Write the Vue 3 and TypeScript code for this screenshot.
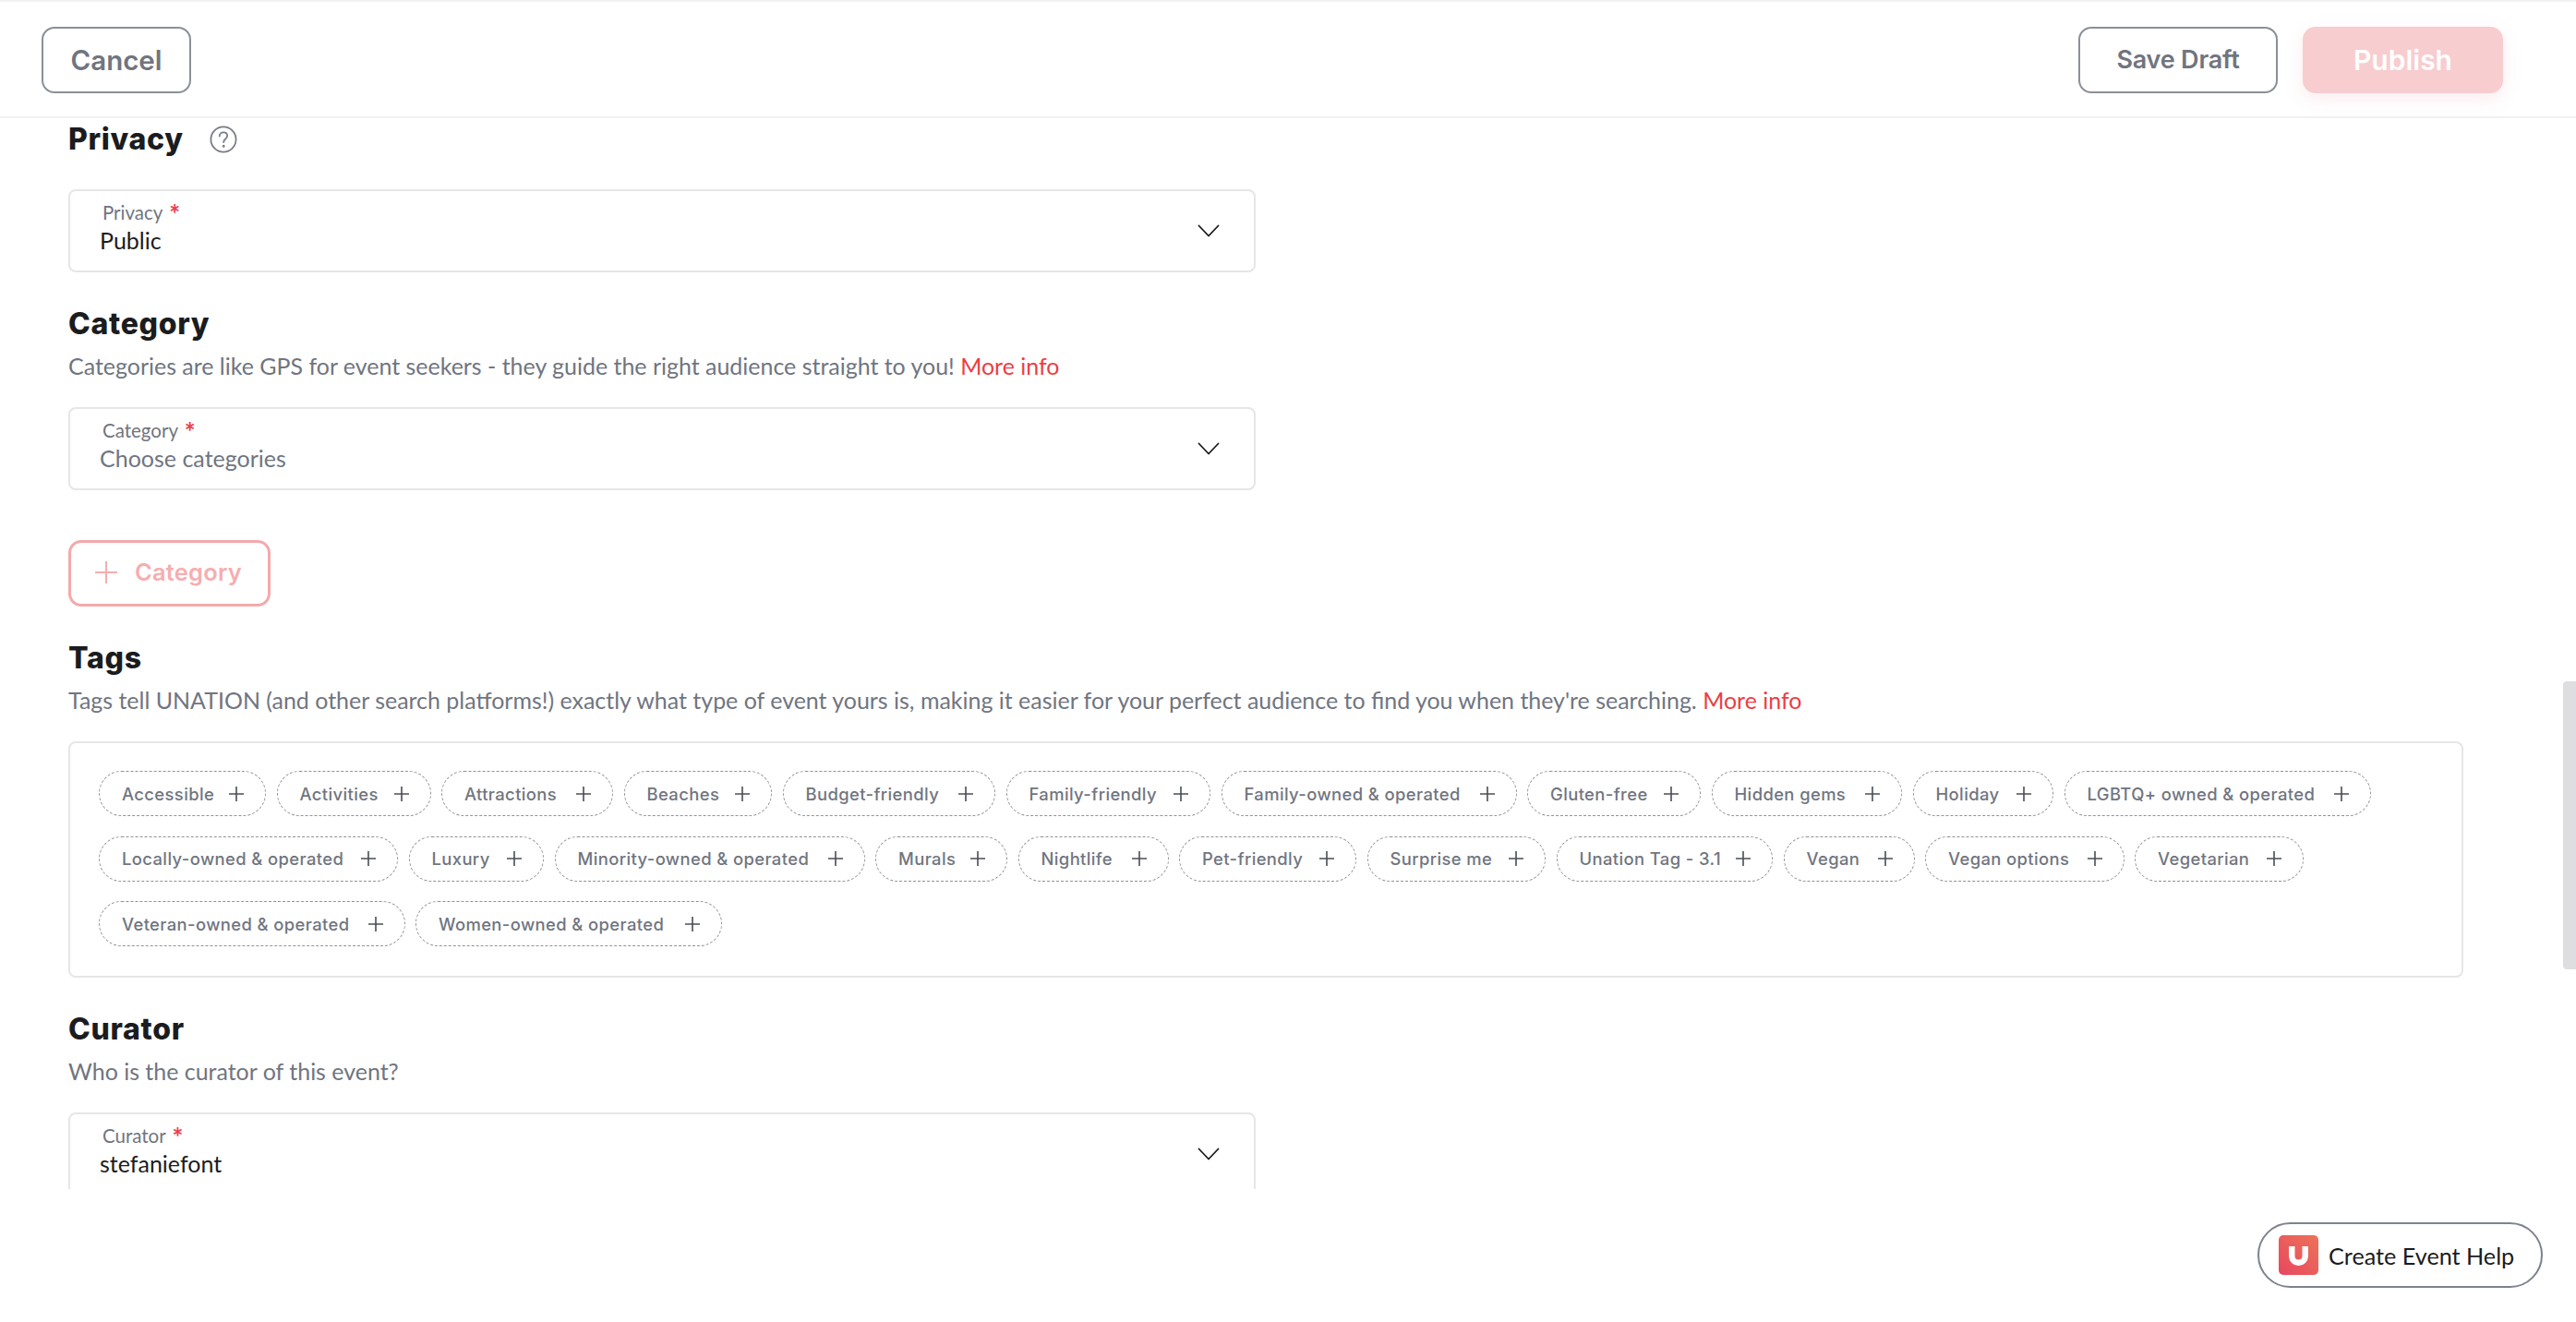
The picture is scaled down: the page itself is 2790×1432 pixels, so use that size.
<template>
  <div class="page">
    <header class="topbar">
      <button class="btn btn-outline cancel">Cancel</button>
      <div class="topbar-right">
        <button class="btn btn-outline draft">Save Draft</button>
        <button class="btn publish">Publish</button>
      </div>
    </header>

    <main class="scroller">
      <section class="privacy">
        <h2 class="heading">
          Privacy
          <svg class="help" viewBox="0 0 30 30" fill="none" stroke="#787c86" stroke-width="1.8">
            <circle cx="15" cy="15" r="13.6" />
            <path d="M10.800 11.500c0-2.500 1.900-4.200 4.300-4.200s4.100 1.600 4.100 3.800c0 3.300-4 3.500-4 6.900" stroke-linecap="round" />
            <circle cx="15.200" cy="22.200" r="0.600" fill="#787c86" />
          </svg>
        </h2>
        <div class="select">
          <div class="select-text">
            <span class="select-label">Privacy <i>*</i></span>
            <span class="select-value">Public</span>
          </div>
          <svg class="chevron" viewBox="0 0 24 14" fill="none" stroke="#1b1c20" stroke-width="1.800">
            <path d="M1.500 1.500 12 12.500 22.500 1.500" stroke-linecap="round" stroke-linejoin="round" />
          </svg>
        </div>
      </section>

      <section class="category">
        <h2 class="heading">Category</h2>
        <p class="desc">
          Categories are like GPS for event seekers - they guide the right audience straight to you!
          <a class="more">More info</a>
        </p>
        <div class="select">
          <div class="select-text">
            <span class="select-label">Category <i>*</i></span>
            <span class="select-value placeholder">Choose categories</span>
          </div>
          <svg class="chevron" viewBox="0 0 24 14" fill="none" stroke="#1b1c20" stroke-width="1.800">
            <path d="M1.500 1.500 12 12.500 22.500 1.500" stroke-linecap="round" stroke-linejoin="round" />
          </svg>
        </div>
        <button class="add-category">
          <svg viewBox="0 0 24 24" fill="none" stroke="#f5aeb0" stroke-width="2">
            <path d="M12 0v24M0 12h24" />
          </svg>
          Category
        </button>
      </section>

      <section class="tags">
        <h2 class="heading">Tags</h2>
        <p class="desc">
          Tags tell UNATION (and other search platforms!) exactly what type of event yours is, making it easier for your perfect audience to find you when they're searching.
          <a class="more">More info</a>
        </p>
        <div class="tag-box">
          <span v-for="tag in tags" :key="tag.name" class="chip" :style="{ width: tag.width + 'px' }">
            {{ tag.name }}
            <svg viewBox="0 0 16 16" fill="none" stroke="#4a4d55" stroke-width="1.600">
              <path d="M8 0v16M0 8h16" />
            </svg>
          </span>
        </div>
      </section>

      <section class="curator">
        <h2 class="heading">Curator</h2>
        <p class="desc">Who is the curator of this event?</p>
        <div class="select">
          <div class="select-text">
            <span class="select-label">Curator <i>*</i></span>
            <span class="select-value">stefaniefont</span>
          </div>
          <svg class="chevron" viewBox="0 0 24 14" fill="none" stroke="#1b1c20" stroke-width="1.800">
            <path d="M1.500 1.500 12 12.500 22.500 1.500" stroke-linecap="round" stroke-linejoin="round" />
          </svg>
        </div>
      </section>

      <div class="scrollbar"></div>
    </main>

    <button class="help-btn">
      <svg class="logo" viewBox="0 0 43 43">
        <defs>
          <linearGradient id="logoGrad" x1="0" y1="1" x2="1" y2="0">
            <stop offset="0" stop-color="#e8475f" />
            <stop offset="1" stop-color="#ec7358" />
          </linearGradient>
        </defs>
        <rect width="43" height="43" rx="5" fill="url(#logoGrad)" />
        <path d="M14.250 12v10.500a7.250 7.250 0 0 0 14.500 0V12" fill="none" stroke="#fff" stroke-width="6.500" />
      </svg>
      Create Event Help
    </button>
  </div>
</template>

<script setup lang="ts">
interface Tag {
  name: string;
  width: number;
}

// widths keep the chips wrapping in the same rows as the original
const tags: Tag[] = [
  { name: "Accessible", width: 181 },
  { name: "Activities", width: 167 },
  { name: "Attractions", width: 186 },
  { name: "Beaches", width: 160.5 },
  { name: "Budget-friendly", width: 230.5 },
  { name: "Family-friendly", width: 221.5 },
  { name: "Family-owned & operated", width: 320 },
  { name: "Gluten-free", width: 188 },
  { name: "Hidden gems", width: 206.5 },
  { name: "Holiday", width: 152.5 },
  { name: "LGBTQ+ owned & operated", width: 332 },
  { name: "Locally-owned & operated", width: 324 },
  { name: "Luxury", width: 146.5 },
  { name: "Minority-owned & operated", width: 336 },
  { name: "Murals", width: 143 },
  { name: "Nightlife", width: 163 },
  { name: "Pet-friendly", width: 192 },
  { name: "Surprise me", width: 193.5 },
  { name: "Unation Tag - 3.1", width: 234.5 },
  { name: "Vegan", width: 142 },
  { name: "Vegan options", width: 215.5 },
  { name: "Vegetarian", width: 183 },
  { name: "Veteran-owned & operated", width: 331.5 },
  { name: "Women-owned & operated", width: 332 },
];
</script>

<style>
html,
body {
  margin: 0;
  background: #fff;
  overflow: hidden;
}
</style>

<style scoped>
.page {
  position: relative;
  height: 1432px;
  display: flex;
  flex-direction: column;
  font-family: "Lato", "Liberation Sans", sans-serif;
  color: #1b1c20;
  background: #fff;
  overflow: hidden;
}

/* Top bar */
.topbar {
  box-sizing: border-box;
  height: 128px;
  flex: none;
  display: flex;
  align-items: center;
  justify-content: space-between;
  padding: 1px 79px 0 45px;
  border-top: 2px solid #f1f1f2;
  border-bottom: 2px solid #f1f1f2;
}

.topbar-right {
  display: flex;
  gap: 27px;
}

.btn {
  box-sizing: border-box;
  height: 72px;
  border-radius: 14px;
  font-family: "Inter", "Open Sans", sans-serif;
  font-weight: 600;
  padding: 0;
}

.btn-outline {
  background: #fff;
  border: 2px solid #8b8f99;
  color: #70757f;
}

.cancel {
  width: 162px;
  font-size: 29.5px;
}

.draft {
  width: 216px;
  font-size: 27px;
  letter-spacing: -0.2px;
}

.publish {
  width: 217px;
  border: none;
  background: #f7cdcf;
  color: #fff;
  font-size: 30px;
  box-shadow: 0 6px 18px rgba(240, 180, 190, 0.25);
}

/* Scrolling form */
.scroller {
  position: relative;
  box-sizing: border-box;
  height: 1160px;
  flex: none;
  padding: 0 0 0 74px;
  overflow: hidden;
}

.heading {
  margin: 0;
  font-family: "Inter", "Open Sans", sans-serif;
  font-size: 32px;
  line-height: 42px;
  font-weight: 800;
  letter-spacing: 0.7px;
  color: #1b1c20;
  display: flex;
  align-items: center;
}

.help {
  width: 30px;
  height: 30px;
  margin-left: 28px;
}

.desc {
  margin: 7px 0 0;
  font-size: 24.96px;
  line-height: 34px;
  color: #70757f;
}

.more {
  color: #ee3d40;
}

.select {
  box-sizing: border-box;
  width: 1286px;
  height: 90px;
  display: flex;
  align-items: center;
  justify-content: space-between;
  padding: 0 37px 0 32px;
  border: 2px solid #e6e6e8;
  border-radius: 8px;
  background: #fff;
}

.select-text {
  align-self: flex-start;
  display: flex;
  flex-direction: column;
  padding-top: 11px;
}

.select-label {
  font-size: 20.5px;
  line-height: 24px;
  color: #70757f;
  margin: 0 0 1px 3px;
}

.select-label i {
  color: #ee3d50;
  font-style: normal;
  font-weight: 700;
  font-size: 28px;
  line-height: 0;
  margin-left: 2px;
  vertical-align: -4px;
}

.select-value {
  font-size: 25px;
  line-height: 34px;
  color: #1b1c20;
}

.select-value.placeholder {
  color: #70757f;
}

.chevron {
  width: 24px;
  height: 14px;
}

.privacy {
  padding-top: 2px;
}

.privacy .select {
  margin-top: 33px;
}

.category {
  margin-top: 35px;
}

.category .select {
  margin-top: 28px;
}

.add-category {
  box-sizing: border-box;
  width: 219px;
  height: 72px;
  margin-top: 54px;
  display: flex;
  align-items: center;
  gap: 19px;
  padding: 0 0 3px 26px;
  background: #fff;
  border: 3px solid #f4a9ab;
  border-radius: 14px;
  color: #f5aeb0;
  font-family: "Inter", "Open Sans", sans-serif;
  font-size: 25.5px;
  letter-spacing: 0.2px;
  font-weight: 600;
}

.add-category svg {
  width: 24px;
  height: 24px;
}

.tags {
  margin-top: 35px;
}

.tag-box {
  box-sizing: border-box;
  width: 2594px;
  height: 256px;
  margin-top: 28px;
  padding: 30px 31px 0;
  display: flex;
  flex-wrap: wrap;
  align-content: flex-start;
  gap: 21.5px 11.5px;
  border: 2px solid #e6e6e8;
  border-radius: 8px;
}

.chip {
  box-sizing: border-box;
  height: 49px;
  display: inline-flex;
  align-items: center;
  justify-content: space-between;
  padding: 0 23px 0 24px;
  border: 1px dashed #8f929a;
  border-radius: 25px;
  font-family: "Inter", "Open Sans", sans-serif;
  font-size: 18.4px;
  letter-spacing: 0.4px;
  font-weight: 500;
  color: #70757f;
  white-space: nowrap;
}

.chip svg {
  width: 16px;
  height: 16px;
}

.curator {
  margin-top: 35px;
}

.curator .select {
  margin-top: 28px;
}

.scrollbar {
  position: absolute;
  right: 0;
  top: 610px;
  width: 14px;
  height: 312px;
  border-radius: 4px 0 0 4px;
  background: #dedee0;
}

/* Floating help button */
.help-btn {
  position: absolute;
  left: 2445px;
  top: 1324px;
  box-sizing: border-box;
  width: 309px;
  height: 71px;
  display: flex;
  align-items: center;
  gap: 11px;
  padding: 0 0 0 21px;
  background: #fff;
  border: 2px solid #7d828e;
  border-radius: 36px;
  font-family: "Lato", sans-serif;
  font-size: 25.2px;
  color: #1b1c20;
}

.logo {
  width: 43px;
  height: 43px;
}
</style>
